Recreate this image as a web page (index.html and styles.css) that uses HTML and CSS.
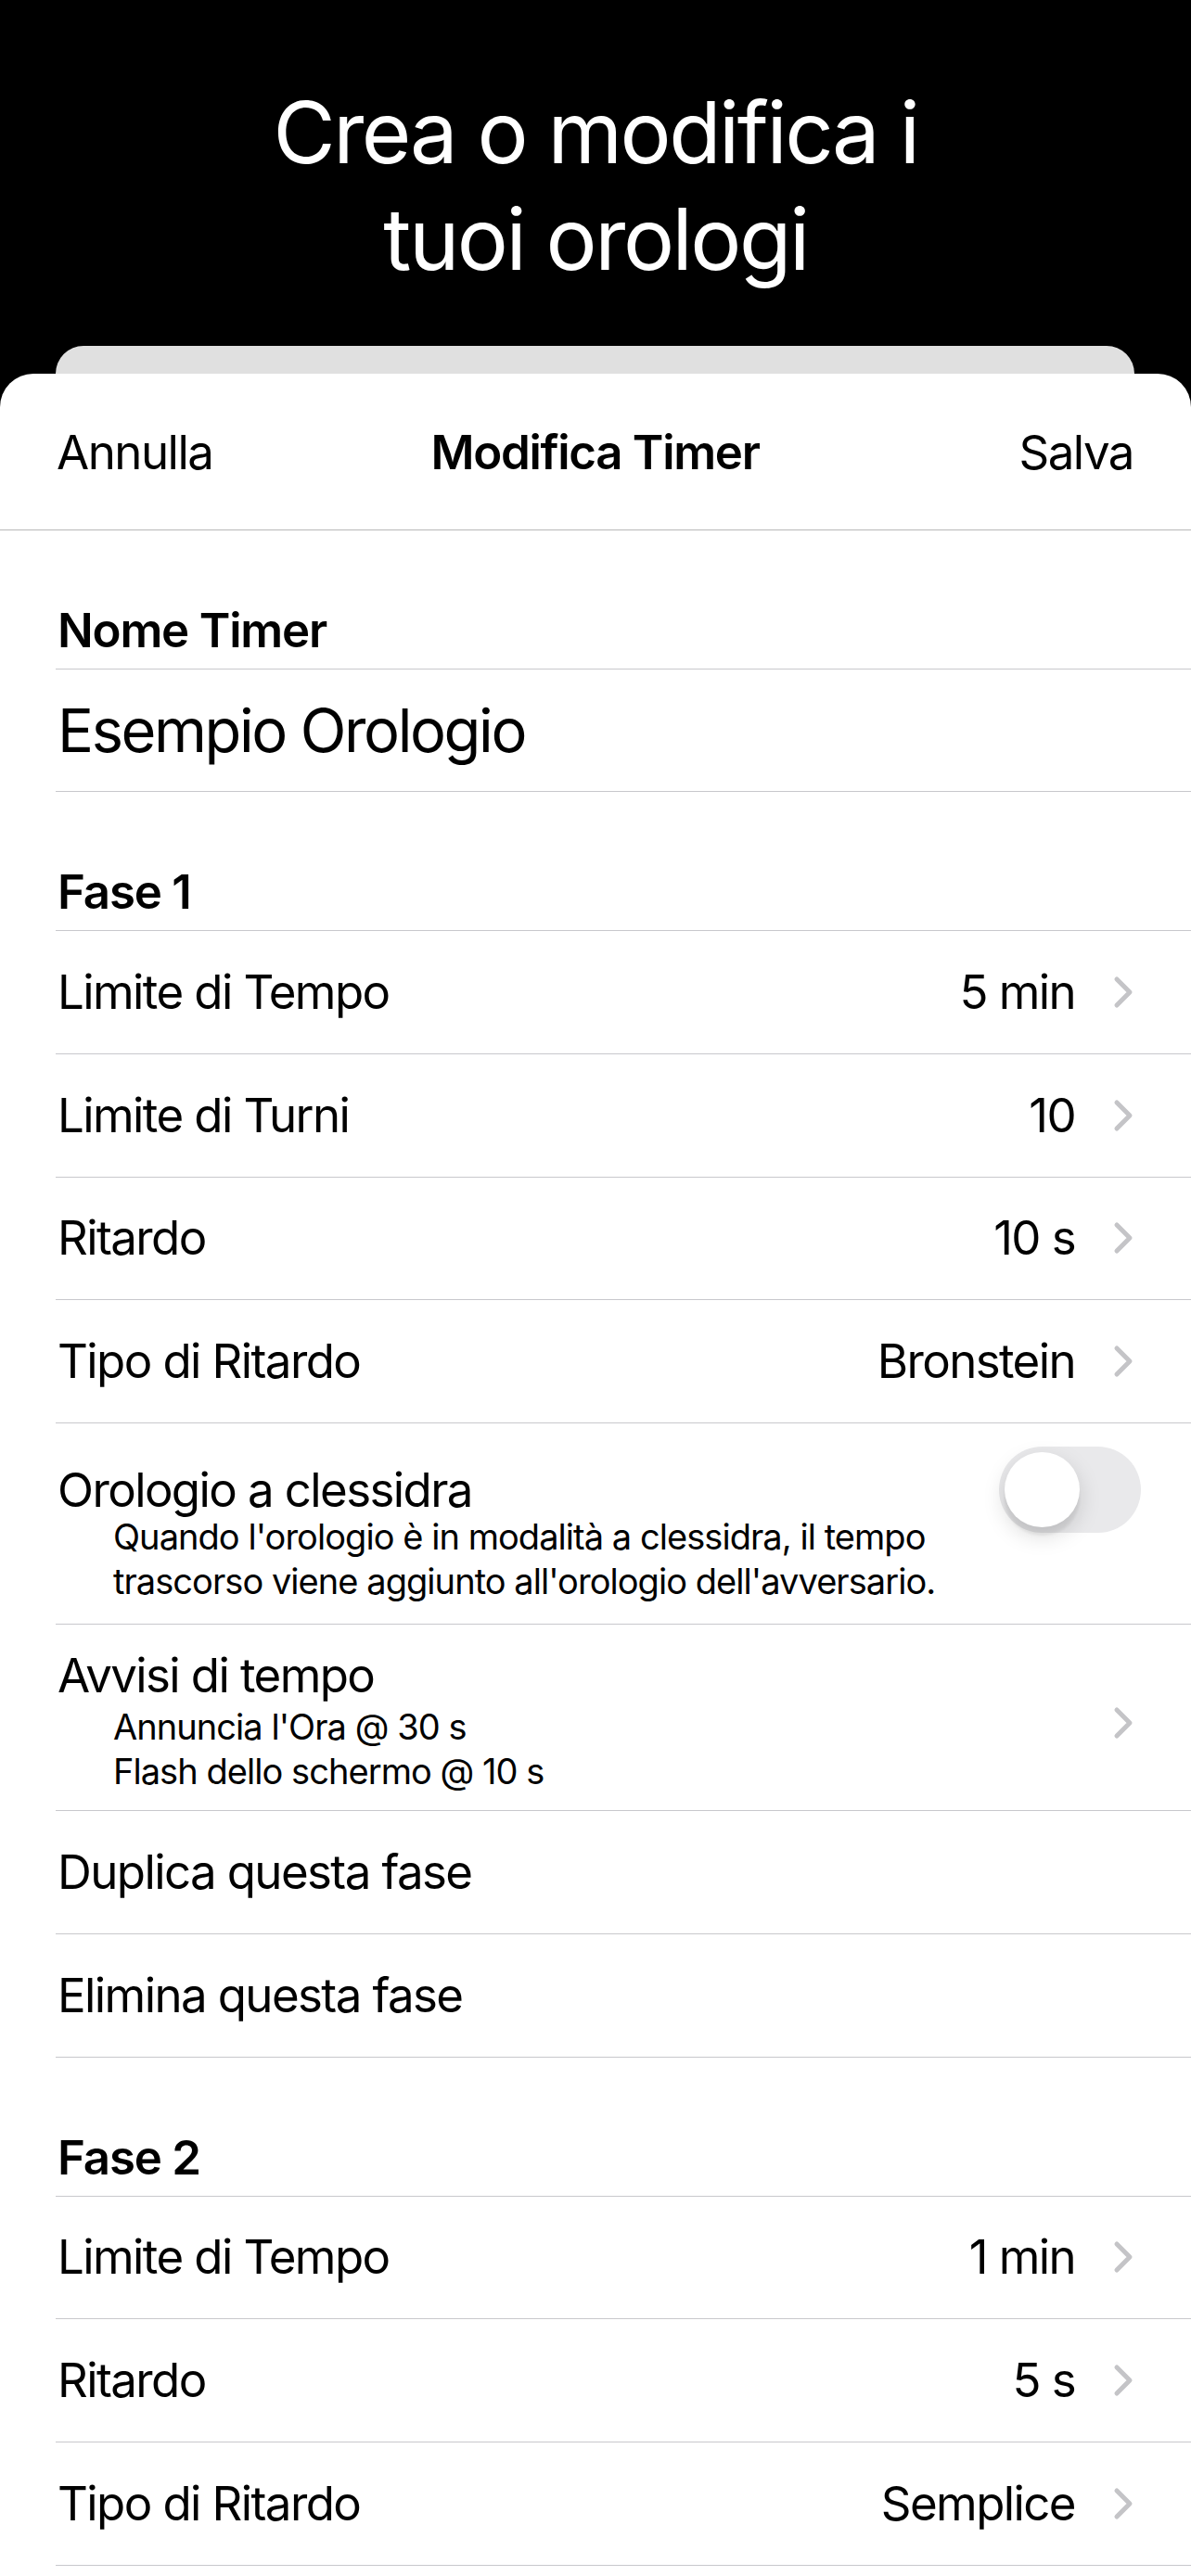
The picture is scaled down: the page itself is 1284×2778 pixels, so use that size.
FILE: index.html
```html
<!DOCTYPE html>
<html lang="it">

<head>
    <meta charset="UTF-8">
    <meta name="viewport" content="width=device-width, initial-scale=1.0">
    <title>Modifica Timer</title>
    <link rel="stylesheet" href="styles.css">
</head>

<body>
    <header class="promo">
        <h1 class="promo-title">Crea o modifica i<br>tuoi orologi</h1>
    </header>

    <div class="sheet-back"></div>

    <main class="sheet">
        <nav class="navbar">
            <span class="nav-btn">Annulla</span>
            <span class="nav-title">Modifica Timer</span>
            <span class="nav-btn nav-btn-right">Salva</span>
        </nav>

        <section class="group">
            <h2 class="group-header">Nome Timer</h2>
            <div class="row row-name">Esempio Orologio</div>
        </section>

        <section class="group">
            <h2 class="group-header">Fase 1</h2>
            <div class="row">
                <span class="row-title">Limite di Tempo</span>
                <span class="row-value">5 min</span>
                <svg class="chevron" viewBox="0 0 22 36"><polyline points="4,4 18,18 4,32" /></svg>
            </div>
            <div class="row">
                <span class="row-title">Limite di Turni</span>
                <span class="row-value">10</span>
                <svg class="chevron" viewBox="0 0 22 36"><polyline points="4,4 18,18 4,32" /></svg>
            </div>
            <div class="row">
                <span class="row-title">Ritardo</span>
                <span class="row-value">10 s</span>
                <svg class="chevron" viewBox="0 0 22 36"><polyline points="4,4 18,18 4,32" /></svg>
            </div>
            <div class="row">
                <span class="row-title">Tipo di Ritardo</span>
                <span class="row-value">Bronstein</span>
                <svg class="chevron" viewBox="0 0 22 36"><polyline points="4,4 18,18 4,32" /></svg>
            </div>
            <div class="row row-toggle">
                <div class="row-text">
                    <div class="row-title toggle-title">Orologio a clessidra</div>
                    <p class="row-note">Quando l'orologio è in modalità a clessidra, il tempo<br>trascorso viene aggiunto all'orologio dell'avversario.</p>
                </div>
                <div class="switch"><span class="switch-knob"></span></div>
            </div>
            <div class="row row-alerts">
                <div class="row-text">
                    <div class="row-title">Avvisi di tempo</div>
                    <p class="row-note">Annuncia l'Ora @ 30 s<br>Flash dello schermo @ 10 s</p>
                </div>
                <svg class="chevron" viewBox="0 0 22 36"><polyline points="4,4 18,18 4,32" /></svg>
            </div>
            <div class="row">
                <span class="row-title">Duplica questa fase</span>
            </div>
            <div class="row">
                <span class="row-title">Elimina questa fase</span>
            </div>
        </section>

        <section class="group">
            <h2 class="group-header">Fase 2</h2>
            <div class="row">
                <span class="row-title">Limite di Tempo</span>
                <span class="row-value">1 min</span>
                <svg class="chevron" viewBox="0 0 22 36"><polyline points="4,4 18,18 4,32" /></svg>
            </div>
            <div class="row">
                <span class="row-title">Ritardo</span>
                <span class="row-value">5 s</span>
                <svg class="chevron" viewBox="0 0 22 36"><polyline points="4,4 18,18 4,32" /></svg>
            </div>
            <div class="row">
                <span class="row-title">Tipo di Ritardo</span>
                <span class="row-value">Semplice</span>
                <svg class="chevron" viewBox="0 0 22 36"><polyline points="4,4 18,18 4,32" /></svg>
            </div>
        </section>
    </main>
</body>

</html>
```

FILE: styles.css
```css
* {
    box-sizing: border-box;
}

body {
    margin: 0;
    background-color: #000;
    font-family: 'Inter', 'Roboto', sans-serif;
    color: #000;
}

/* Intestazione nera in alto */
.promo {
    padding: 85px 0 58px;
    height: 373px;
}

.promo-title {
    margin: 0;
    color: #fff;
    font-size: 92px;
    line-height: 115px;
    font-weight: 400;
    text-align: center;
    letter-spacing: -2.5px;
}

.sheet-back {
    height: 30px;
    margin: 0 61px 0 60px;
    background-color: #e0e0e0;
    border-radius: 32px 32px 0 0;
}

.sheet {
    background-color: #fff;
    border-radius: 36px 36px 0 0;
    min-height: 2375px;
}

.navbar {
    display: grid;
    grid-template-columns: 1fr auto 1fr;
    align-items: start;
    height: 169px;
    padding: 54px 62px 0 61px;
    border-bottom: 1px solid #b8b8b8;
    font-size: 51px;
    line-height: 62px;
    letter-spacing: -1.5px;
}

.nav-title {
    font-weight: 600;
    letter-spacing: -1.3px;
}

.nav-btn-right {
    justify-self: end;
}

.group {
    margin-left: 60px;
}

.group-header {
    margin: 0;
    padding: 77px 0 10px 2px;
    font-size: 51px;
    line-height: 62px;
    font-weight: 600;
    letter-spacing: -1.2px;
    border-bottom: 1px solid #c8c8cc;
}

.row {
    display: flex;
    align-items: center;
    min-height: 132.75px;
    padding: 0 62px 0 2px;
    border-bottom: 1px solid #c8c8cc;
    font-size: 51px;
    line-height: 62px;
    letter-spacing: -1.6px;
}

.row-title {
    flex: 1;
}

.row-value {
    margin-right: 41px;
}

.chevron {
    width: 22px;
    height: 36px;
    fill: none;
    stroke: #c4c4c7;
    stroke-width: 5;
    stroke-linecap: round;
    stroke-linejoin: round;
}

.row-name {
    min-height: 132px;
    font-size: 65px;
    line-height: 80px;
    letter-spacing: -2.4px;
}

.row-text {
    flex: 1;
}

.row-note {
    margin: 0;
    padding-left: 60px;
    font-size: 38px;
    line-height: 48px;
    letter-spacing: -0.95px;
}

.row-toggle {
    align-items: flex-start;
    padding: 25px 54px 22px 2px;
}

.toggle-title {
    padding-top: 21px;
    line-height: 52px;
}

.row-alerts {
    padding-top: 29px;
    padding-bottom: 18px;
}

.row-alerts .row-title {
    line-height: 52px;
}

.row-alerts .row-note {
    margin-top: 5px;
}

.switch {
    display: flex;
    align-items: center;
    width: 153px;
    height: 93px;
    padding: 0 6px;
    border-radius: 47px;
    background-color: #e9e9eb;
}

.switch-knob {
    width: 81px;
    height: 81px;
    border-radius: 50%;
    background-color: #fff;
    box-shadow: 0 9px 24px rgba(0, 0, 0, 0.15), 0 9px 3px rgba(0, 0, 0, 0.06);
}
```
